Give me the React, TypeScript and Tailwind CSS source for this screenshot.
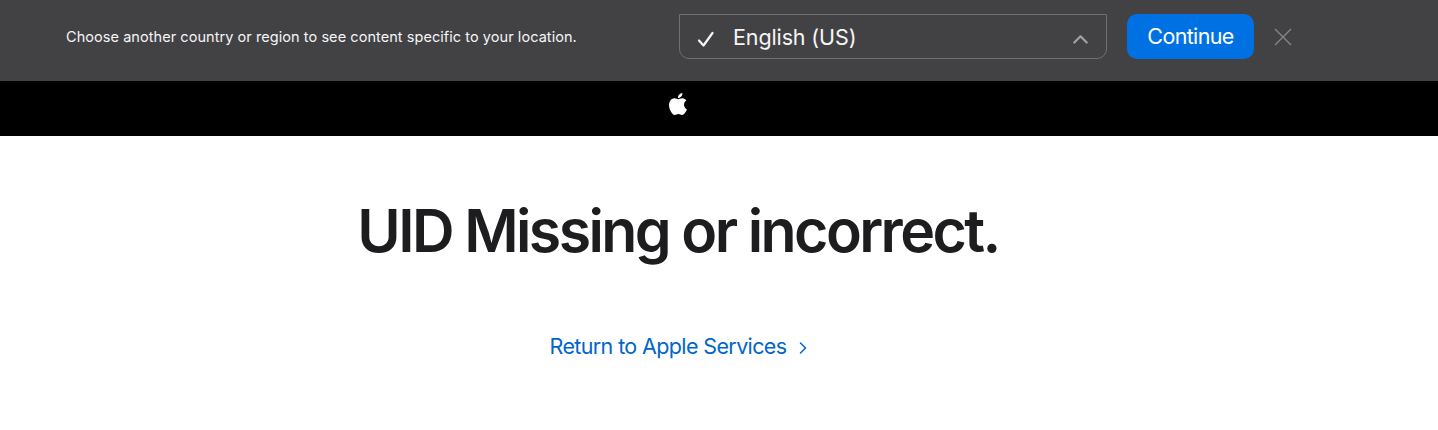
import { SiApple } from 'react-icons/si';

function LocaleSelect() {
  return (
    <button
      type="button"
      className="flex h-[45px] w-[428px] items-center rounded-b-[10px] border border-[#6e6e73] pl-[17px] pr-[18px] text-[#f5f5f7]"
    >
      <svg width="18" height="18" viewBox="0 0 18 18" fill="none" className="mt-[5px] shrink-0">
        <path d="M2 10.5L6.5 15.5L15.5 3" stroke="currentColor" strokeWidth="2.2" strokeLinecap="round" strokeLinejoin="round" />
      </svg>
      <span className="ml-[18px] text-[21.5px] leading-[26px] tracking-[-0.12px]">English (US)</span>
      <svg width="16" height="10" viewBox="0 0 16 10" fill="none" className="ml-auto mt-[4px] shrink-0">
        <path d="M2.3 8.5L8.5 2.3L14.7 8.5" stroke="#a1a1a6" strokeWidth="2.2" strokeLinecap="round" strokeLinejoin="round" />
      </svg>
    </button>
  );
}

function LocaleBar() {
  return (
    <div className="flex h-[81px] items-start bg-[#424245] pl-[66px] pt-[14px]">
      <p className="w-[613px] whitespace-nowrap text-[14.5px] leading-[46px] tracking-[0.06px] text-[#f5f5f7]">
        <span>Choose another country or region to see content specific to your location.</span>
      </p>
      <LocaleSelect />
      <button
        type="button"
        className="ml-5 h-[45px] w-[127px] rounded-[10px] bg-[#0071e3] text-[21.5px] leading-[45px] tracking-[-0.65px] text-white"
      >
        <span>Continue</span>
      </button>
      <button type="button" aria-label="Close" className="ml-5 mt-[14px]">
        <svg width="18" height="18" viewBox="0 0 18 18" fill="none">
          <path d="M1 1L17 17M17 1L1 17" stroke="#86868b" strokeWidth="1.3" />
        </svg>
      </button>
    </div>
  );
}

export default function App() {
  return (
    <div className="min-h-[430px] bg-white font-['Inter','Liberation_Sans',sans-serif]">
      <LocaleBar />

      <header className="flex h-[55px] bg-black pl-[667px] pt-[12px]">
        <SiApple size={22} className="text-white" />
      </header>

      <main className="flex w-[1356px] flex-col items-center pt-[59px]">
        <h1 className="whitespace-nowrap text-[59px] font-semibold leading-[72px] tracking-[-2.6px] text-[#1d1d1f]">
          UID Missing or incorrect.
        </h1>
        <a href="#" className="mt-[65px] flex items-center text-[21.5px] leading-[28px] tracking-[-0.62px] text-[#0066cc]">
          <span>Return to Apple Services</span>
          <svg width="8" height="12" viewBox="0 0 8 12" fill="none" className="ml-[12px] mt-[4px]">
            <path d="M1.5 1L6.5 6L1.5 11" stroke="currentColor" strokeWidth="1.5" strokeLinecap="round" strokeLinejoin="round" />
          </svg>
        </a>
      </main>
    </div>
  );
}
